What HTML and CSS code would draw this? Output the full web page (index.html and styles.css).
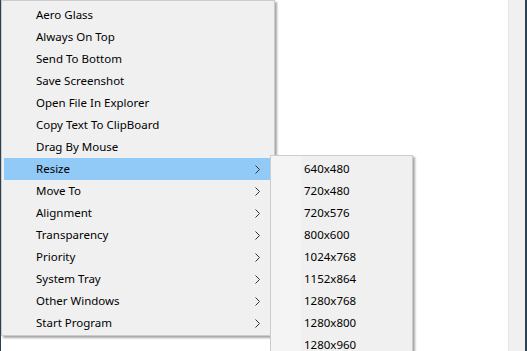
FILE: index.html
```html
<!DOCTYPE html>
<html lang="en">
<head>
  <meta charset="UTF-8" />
  <title>Context Menu</title>
  <link rel="stylesheet" href="styles.css">
</head>
<body>
  <div class="screen">
    <div class="edge"></div>
    <div class="page"></div>
    <div class="side"></div>
    <div class="edge edge-right"></div>
  </div>

  <!-- main context menu -->
  <ul class="menu main-menu">
    <li>Aero Glass</li>
    <li>Always On Top</li>
    <li>Send To Bottom</li>
    <li>Save Screenshot</li>
    <li>Open File In Explorer</li>
    <li>Copy Text To ClipBoard</li>
    <li>Drag By Mouse</li>
    <li class="sub active">Resize <svg class="arrow" viewBox="0 0 5 9"><path d="M0.5 0.5 L4.5 4.5 L0.5 8.5"/></svg></li>
    <li class="sub">Move To <svg class="arrow" viewBox="0 0 5 9"><path d="M0.5 0.5 L4.5 4.5 L0.5 8.5"/></svg></li>
    <li class="sub">Alignment <svg class="arrow" viewBox="0 0 5 9"><path d="M0.5 0.5 L4.5 4.5 L0.5 8.5"/></svg></li>
    <li class="sub">Transparency <svg class="arrow" viewBox="0 0 5 9"><path d="M0.5 0.5 L4.5 4.5 L0.5 8.5"/></svg></li>
    <li class="sub">Priority <svg class="arrow" viewBox="0 0 5 9"><path d="M0.5 0.5 L4.5 4.5 L0.5 8.5"/></svg></li>
    <li class="sub">System Tray <svg class="arrow" viewBox="0 0 5 9"><path d="M0.5 0.5 L4.5 4.5 L0.5 8.5"/></svg></li>
    <li class="sub">Other Windows <svg class="arrow" viewBox="0 0 5 9"><path d="M0.5 0.5 L4.5 4.5 L0.5 8.5"/></svg></li>
    <li class="sub">Start Program <svg class="arrow" viewBox="0 0 5 9"><path d="M0.5 0.5 L4.5 4.5 L0.5 8.5"/></svg></li>
  </ul>

  <!-- Resize submenu -->
  <ul class="menu sub-menu">
    <li>640x480</li>
    <li>720x480</li>
    <li>720x576</li>
    <li>800x600</li>
    <li>1024x768</li>
    <li>1152x864</li>
    <li>1280x768</li>
    <li>1280x800</li>
    <li>1280x960</li>
  </ul>
</body>
</html>
```

FILE: styles.css
```css
body {
  margin: 0;
  width: 527px;
  height: 351px;
  overflow: hidden;
  position: relative;
  font-family: 'Segoe UI', 'Noto Sans', sans-serif;
  font-size: 11.5px;
  color: #000;
  background: #fff;
}

.screen {
  display: flex;
  height: 100%;
}

.edge {
  width: 1px;
  background: #2e4152;
}

.edge-right {
  width: 2px;
}

.page {
  flex: 1;
  background: #fff;
}

.side {
  width: 16px;
  background: #f0f0f0;
  border-left: 1px solid #e6e6e6;
}

.menu {
  position: absolute;
  list-style: none;
  margin: 0;
  background: #f0f0f0;
  border: 1px solid #cccccc;
  box-shadow: 2px 2px 2px rgba(0, 0, 0, 0.35);
}

.menu li {
  height: 22px;
  line-height: 22px;
  margin: 0 2px;
  white-space: nowrap;
  position: relative;
}

.main-menu {
  left: 1px;
  top: 0;
  width: 272px;
  padding: 3px 0 1px 0;
}

.main-menu li {
  padding-left: 32px;
}

.main-menu li.active {
  background: #91c9f7;
}

.arrow {
  position: absolute;
  right: 12px;
  top: 7px;
  width: 5px;
  height: 9px;
  fill: none;
  stroke: #333;
  stroke-width: 1;
}

.sub-menu {
  left: 270px;
  top: 155px;
  width: 141px;
  padding: 2px 0 0 0;
  background: linear-gradient(to right, #f4f4f4 0, #f4f4f4 30px, #f0f0f0 30px);
}

.sub-menu li {
  padding-left: 31px;
}
```
